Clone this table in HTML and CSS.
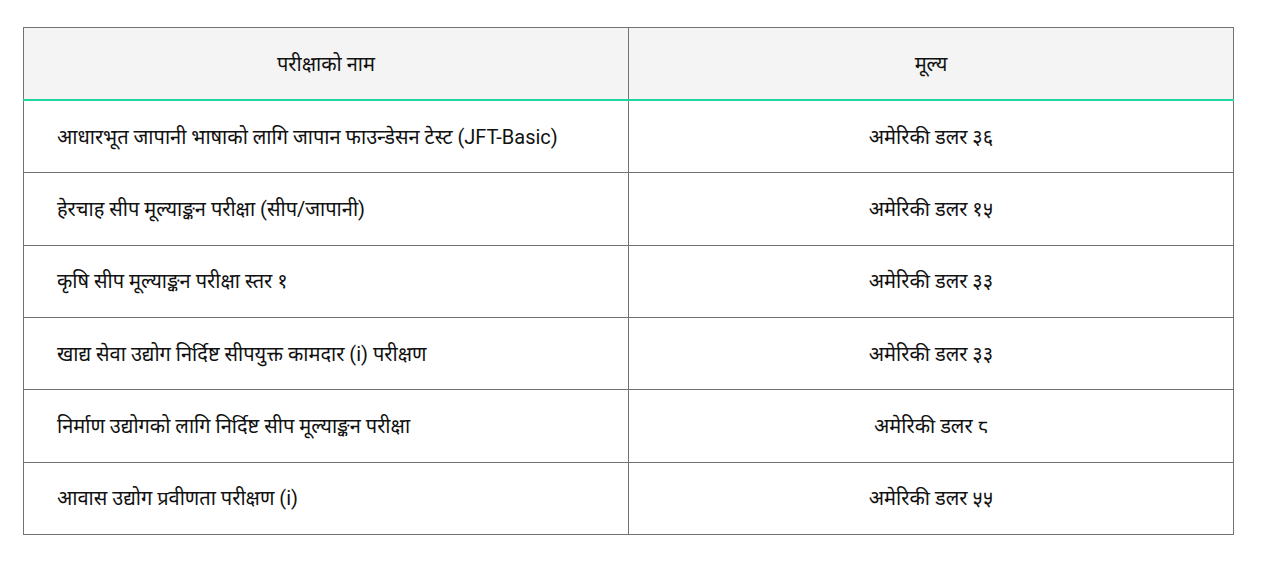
FILE: index.html
```html
<!DOCTYPE html>
<html lang="ne">
<head>
<meta charset="utf-8">
<link rel="stylesheet" href="styles.css">
</head>
<body>
<div class="wrap">
<table class="fees">
<thead>
<tr><th>परीक्षाको नाम</th><th>मूल्य</th></tr>
</thead>
<tbody>
<tr><td class="name">आधारभूत जापानी भाषाको लागि जापान फाउन्डेसन टेस्ट (JFT-Basic)</td><td class="price">अमेरिकी डलर ३६</td></tr>
<tr><td class="name">हेरचाह सीप मूल्याङ्कन परीक्षा (सीप/जापानी)</td><td class="price">अमेरिकी डलर १५</td></tr>
<tr><td class="name">कृषि सीप मूल्याङ्कन परीक्षा स्तर १</td><td class="price">अमेरिकी डलर ३३</td></tr>
<tr><td class="name">खाद्य सेवा उद्योग निर्दिष्ट सीपयुक्त कामदार (i) परीक्षण</td><td class="price">अमेरिकी डलर ३३</td></tr>
<tr><td class="name">निर्माण उद्योगको लागि निर्दिष्ट सीप मूल्याङ्कन परीक्षा</td><td class="price">अमेरिकी डलर ८</td></tr>
<tr><td class="name">आवास उद्योग प्रवीणता परीक्षण (i)</td><td class="price">अमेरिकी डलर ५५</td></tr>
</tbody>
</table>
</div>
</body>
</html>
```
FILE: styles.css
```css
html, body {
  margin: 0;
  padding: 0;
  background: #ffffff;
}
body {
  font-family: Roboto, "Noto Sans", sans-serif;
  color: #111111;
}
.wrap {
  padding: 27px 27px 0 23px;
}
.fees {
  width: 1211px;
  border-collapse: collapse;
  font-size: 20px;
  line-height: 26px;
}
.fees th {
  background: #f4f4f4;
  font-weight: normal;
  height: 71px;
  padding: 0;
  text-align: center;
  border: 1px solid #727272;
  border-bottom: 2px solid #1fd69f;
}
.fees th:first-child {
  width: 604px;
}
.fees td {
  height: 71.34px;
  padding: 0 20px 0 33px;
  border: 1px solid #727272;
}
.fees td.price {
  text-align: center;
  padding: 0;
}
```
